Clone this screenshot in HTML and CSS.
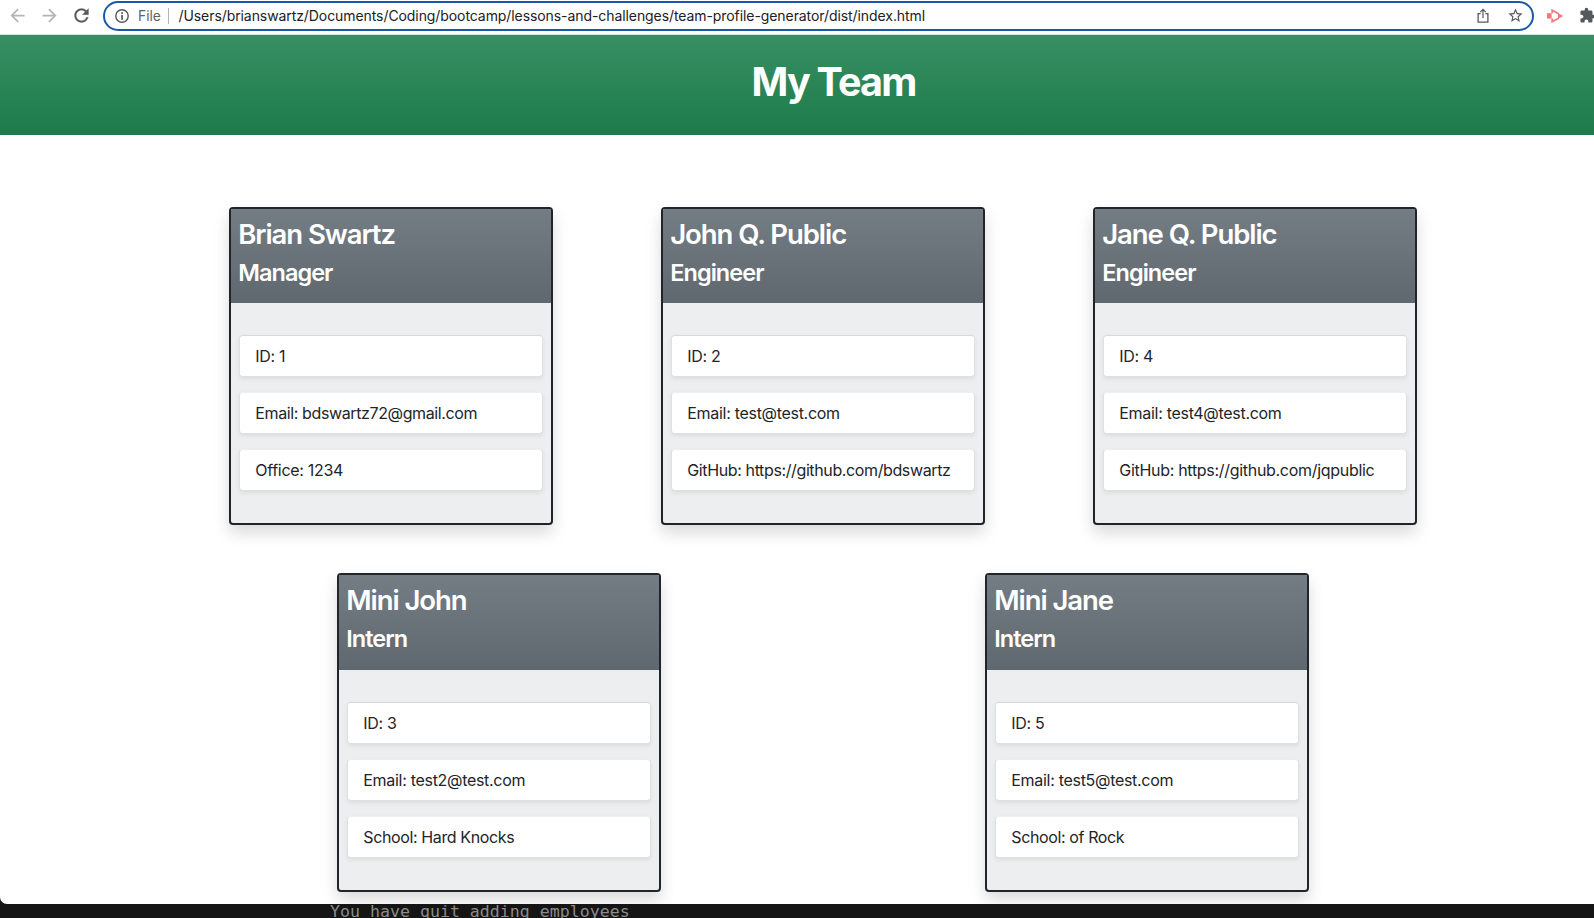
FILE: index.html
```html
<!DOCTYPE html>
<html lang="en">
<head>
<meta charset="utf-8">
<title>My Team</title>
<link rel="stylesheet" href="styles.css">
</head>
<body>
<div class="screen">
  <div class="window">
    <div class="toolbar">
      <svg class="nav-icon nav-off" viewBox="0 0 24 24"><path d="M20 11H7.83l5.59-5.59L12 4l-8 8 8 8 1.41-1.41L7.83 13H20v-2z"/></svg>
      <svg class="nav-icon nav-off" viewBox="0 0 24 24"><path d="M12 4l-1.41 1.41L16.17 11H4v2h12.17l-5.58 5.59L12 20l8-8z"/></svg>
      <svg class="nav-icon nav-reload" viewBox="0 0 24 24"><path d="M17.65 6.35A7.958 7.958 0 0 0 12 4c-4.42 0-7.99 3.58-7.99 8s3.57 8 7.99 8c3.73 0 6.84-2.55 7.73-6h-2.08A5.99 5.99 0 0 1 12 18c-3.31 0-6-2.69-6-6s2.69-6 6-6c1.66 0 3.14.69 4.22 1.78L13 11h7V4l-2.35 2.35z"/></svg>
      <div class="omnibox">
        <svg class="info" viewBox="0 0 14 14"><circle cx="7" cy="7" r="6.2" fill="none" stroke="#55585c" stroke-width="1.4"/><rect x="6.2" y="3.2" width="1.7" height="1.7"/><rect x="6.2" y="6" width="1.7" height="4.8"/></svg>
        <span class="scheme">File</span>
        <span class="divider"></span>
        <span class="url">/Users/brianswartz/Documents/Coding/bootcamp/lessons-and-challenges/team-profile-generator/dist/index.html</span>
        <svg class="share" viewBox="0 0 12 16" fill="none"><path d="M3.6 5.6H1.1v8.6h9.8V5.6H8.4" stroke="#55585c" stroke-width="1.3"/><path d="M6 10V1.6M3.3 4.1L6 1.4l2.7 2.7" stroke="#55585c" stroke-width="1.2"/></svg>
        <svg class="star" viewBox="0 0 24 24"><path d="M22 9.24l-7.19-.62L12 2 9.19 8.63 2 9.24l5.46 4.73L5.82 21 12 17.27 18.18 21l-1.63-7.03L22 9.24zM12 15.4l-3.76 2.27 1-4.28-3.32-2.88 4.38-.38L12 6.1l1.71 4.04 4.38.38-3.32 2.88 1 4.28L12 15.4z"/></svg>
      </div>
      <svg class="recorder" viewBox="0 0 17 14"><rect x="0" y="4.2" width="4.6" height="5.4" fill="#f2797d"/><path d="M5.2 4.2V1.3l6.6 3.4M5.2 9.6v3l6.6-3.4" fill="none" stroke="#f2797d" stroke-width="1.8"/><path d="M11 4l5.2 3L11 10z" fill="#f2797d"/></svg>
      <svg class="puzzle" viewBox="0 0 24 24"><path d="M20.5 11H19V7c0-1.1-.9-2-2-2h-4V3.5a2.5 2.5 0 0 0-5 0V5H4c-1.1 0-1.99.9-1.99 2v3.8H3.5c1.49 0 2.7 1.21 2.7 2.7s-1.21 2.7-2.7 2.7H2V20c0 1.1.9 2 2 2h3.8v-1.5c0-1.49 1.21-2.7 2.7-2.7 1.49 0 2.7 1.21 2.7 2.7V22H17c1.1 0 2-.9 2-2v-4h1.5a2.5 2.5 0 0 0 0-5z"/></svg>
    </div>
    <header class="banner"><h1 class="title">My Team</h1></header>
    <main class="team">
      <div class="row">
        <section class="card">
          <div class="card-head"><h2 class="name">Brian Swartz</h2><h3 class="role">Manager</h3></div>
          <ul class="facts"><li class="fact fact-first"><span>ID: 1</span></li><li class="fact"><span class="tight">Email: bdswartz72@gmail.com</span></li><li class="fact"><span>Office: 1234</span></li></ul>
        </section>
        <section class="card">
          <div class="card-head"><h2 class="name">John Q. Public</h2><h3 class="role">Engineer</h3></div>
          <ul class="facts"><li class="fact fact-first"><span>ID: 2</span></li><li class="fact"><span>Email: test@test.com</span></li><li class="fact"><span class="tight">GitHub: https://github.com/bdswartz</span></li></ul>
        </section>
        <section class="card">
          <div class="card-head"><h2 class="name">Jane Q. Public</h2><h3 class="role">Engineer</h3></div>
          <ul class="facts"><li class="fact fact-first"><span>ID: 4</span></li><li class="fact"><span>Email: test4@test.com</span></li><li class="fact"><span>GitHub: https://github.com/jqpublic</span></li></ul>
        </section>
      </div>
      <div class="row row-interns">
        <section class="card">
          <div class="card-head"><h2 class="name">Mini John</h2><h3 class="role">Intern</h3></div>
          <ul class="facts"><li class="fact fact-first"><span>ID: 3</span></li><li class="fact"><span>Email: test2@test.com</span></li><li class="fact"><span class="tight">School: Hard Knocks</span></li></ul>
        </section>
        <section class="card">
          <div class="card-head"><h2 class="name">Mini Jane</h2><h3 class="role">Intern</h3></div>
          <ul class="facts"><li class="fact fact-first"><span>ID: 5</span></li><li class="fact"><span>Email: test5@test.com</span></li><li class="fact"><span class="tight">School: of Rock</span></li></ul>
        </section>
      </div>
    </main>
  </div>
  <div class="terminal">You have quit adding employees</div>
</div>
</body>
</html>
```
FILE: styles.css
```css
* { box-sizing: border-box; }
body, h1, h2, h3, ul { margin: 0; padding: 0; }
body { font-family: Inter, "Noto Sans", sans-serif; color: #212529; background: #151515; }
.screen { width: 1594px; height: 918px; overflow: hidden; background: #151515; }
.window { height: 904px; overflow: hidden; background: #fff; border-bottom-left-radius: 7px; }

.toolbar { display: flex; align-items: center; width: 1610px; height: 35px; padding: 0 0 3px 7px; border-bottom: 1px solid #cfe3d8; }
.nav-icon { flex: none; width: 21px; height: 21px; margin-right: 11px; fill: #55585c; }
.nav-off { fill: #b4b5b7; }
.nav-reload { stroke: #55585c; stroke-width: .3; }
.omnibox { display: flex; align-items: center; width: 1431px; height: 30px; padding-left: 10px; border: 2px solid #1959a8; border-radius: 15px; }
.info { flex: none; width: 14px; height: 14px; fill: #55585c; }
.scheme { width: 22px; margin-left: 9px; font-size: 13.8px; color: #5f6368; white-space: nowrap; }
.divider { width: 1px; height: 16px; margin: 0 9.5px 0 8px; background: #b3b5b8; }
.url { flex: 1; font-size: 14px; letter-spacing: -.08px; color: #202124; white-space: nowrap; }
.share { width: 12px; height: 16px; margin-right: 17.5px; }
.star { width: 17px; height: 17px; margin-right: 8.5px; fill: #55585c; }
.recorder { width: 17px; height: 14px; margin-left: 13px; }
.puzzle { width: 17px; height: 17px; margin-left: 15px; fill: #55585c; }

.banner { width: 1667px; height: 100px; padding-top: 23px; background: linear-gradient(#378f63, #1d7b4a); text-align: center; }
.title { font-size: 39.5px; line-height: 48px; font-weight: 700; letter-spacing: -1.8px; color: #fff; }

.team { display: flex; flex-direction: column; gap: 48px; width: 1296px; margin: 72px 0 0 175px; }
.row { display: flex; justify-content: space-around; }
.card { width: 324px; height: 318px; border: 2px solid #212529; border-radius: 4px; background: #edeef0; box-shadow: 0 8px 16px rgba(0, 0, 0, .15); }
.card-head { height: 94px; padding: 9px 7.2px 0; background: linear-gradient(#757d84, #60686f); color: #fff; }
.row-interns .card { height: 319px; }
.row-interns .card-head { height: 95px; }
.name { margin-bottom: 8.4px; font-size: 27.5px; line-height: 33px; font-weight: 600; letter-spacing: -1.05px; white-space: nowrap; }
.role { font-size: 23.5px; line-height: 28.8px; font-weight: 600; letter-spacing: -.95px; }
.facts { display: flex; flex-direction: column; gap: 15px; padding: 32px 8px; list-style: none; }
.fact { height: 42px; padding: 8px 15.3px; border: 1px solid #dfe0e2; border-top-color: #edeef0; border-radius: 4px; background: #fff; box-shadow: 0 2px 4px rgba(0, 0, 0, .075); font-size: 16px; line-height: 24px; letter-spacing: -.3px; white-space: nowrap; }
.fact-first { border-top-color: #d8d9db; }
.tight { letter-spacing: -.38px; }

.terminal { height: 14px; padding-left: 330px; overflow: hidden; font-family: "DejaVu Sans Mono", monospace; font-size: 16.6px; line-height: 15px; color: #8b8b8b; white-space: pre; }
```
